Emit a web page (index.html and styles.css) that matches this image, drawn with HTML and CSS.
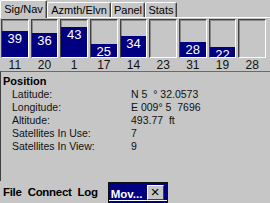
FILE: index.html
```html
<!DOCTYPE html>
<html>
<head>
<meta charset="utf-8">
<link rel="stylesheet" href="styles.css">
</head>
<body>
<div class="tabs">
  <div class="tab active w-sig">Sig/Nav</div>
  <div class="tab w-az">Azmth/Elvn</div>
  <div class="tab w-pan">Panel</div>
  <div class="tab w-st">Stats</div>
</div>
<div class="bars">
  <div class="bar"><div class="fill" style="height:26px">39</div></div>
  <div class="bar"><div class="fill" style="height:24px">36</div></div>
  <div class="bar"><div class="fill" style="height:30px">43</div></div>
  <div class="bar"><div class="fill" style="height:13px">25</div></div>
  <div class="bar"><div class="fill" style="height:21px">34</div></div>
  <div class="bar"></div>
  <div class="bar"><div class="fill" style="height:15px">28</div></div>
  <div class="bar"><div class="fill" style="height:10px">22</div></div>
  <div class="bar"></div>
</div>
<div class="labels">
  <span>11</span><span>20</span><span>1</span><span>17</span><span>14</span><span>23</span><span>31</span><span>19</span><span>28</span>
</div>
<div class="panel">
  <div class="heading">Position</div>
  <div class="row"><span class="key">Latitude:</span><span class="val">N 5 &nbsp;° 32.0573</span></div>
  <div class="row"><span class="key">Longitude:</span><span class="val">E 009° 5 &nbsp;7696</span></div>
  <div class="row"><span class="key">Altitude:</span><span class="val">493.77 &nbsp;ft</span></div>
  <div class="row"><span class="key">Satellites In Use:</span><span class="val">7</span></div>
  <div class="row"><span class="key">Satellites In View:</span><span class="val">9</span></div>
</div>
<div class="menubar">
  <span class="menu">File</span>
  <span class="menu">Connect</span>
  <span class="menu">Log</span>
  <div class="task">
    <span class="task-title">Mov...</span>
    <span class="close">×</span>
    <div class="task-grid"><i></i><i></i><i></i></div>
  </div>
</div>
</body>
</html>
```
FILE: styles.css
```css
html, body {
  margin: 0;
  padding: 0;
}
body {
  width: 270px;
  height: 203px;
  overflow: hidden;
  background: #c6c6c6;
  font-family: "Liberation Sans", Arial, sans-serif;
  color: #000;
}
.tabs {
  display: flex;
  align-items: flex-end;
  height: 17px;
  border-bottom: 1px solid #fff;
}
.tab {
  box-sizing: border-box;
  height: 15px;
  padding-top: 1px;
  font-size: 11px;
  line-height: 13px;
  text-align: center;
  border-left: 1px solid #fff;
  border-top: 1px solid #fff;
  border-right: 1px solid #404040;
  box-shadow: inset -1px 0 0 #8a8a8a;
  border-radius: 2px 2px 0 0;
  background: #c6c6c6;
}
.tab.active {
  height: 18px;
  margin-bottom: -1px;
  padding-top: 2px;
  position: relative;
}
.w-sig { width: 47px; }
.w-az { width: 64px; }
.w-pan { width: 34px; }
.w-st { width: 32px; }

.bars {
  display: grid;
  grid-template-columns: repeat(9, 1fr);
  column-gap: 2px;
  width: 265px;
  margin: 1px 0 0 1px;
  height: 39px;
}
.bar {
  box-sizing: border-box;
  height: 39px;
  border-top: 1px solid #404040;
  border-left: 1px solid #404040;
  border-right: 1px solid #fff;
  border-bottom: 1px solid #fff;
  box-shadow: inset 1px 1px 0 #8a8a8a;
  display: flex;
  flex-direction: column;
  justify-content: flex-end;
  overflow: hidden;
}
.fill {
  background: #000080;
  color: #fff;
  font-size: 13px;
  line-height: 15px;
  text-align: center;
  overflow: hidden;
}
.labels {
  display: grid;
  grid-template-columns: repeat(9, 1fr);
  column-gap: 2px;
  width: 265px;
  margin-left: 1px;
  height: 12px;
  padding-top: 1px;
  font-size: 12px;
  line-height: 12px;
  text-align: center;
  color: #111;
}
.panel {
  box-sizing: border-box;
  height: 110px;
  border-top: 1px solid #6a6a6a;
  border-left: 1px solid #404040;
  padding: 3px 0 0 2px;
  font-size: 10.5px;
  line-height: 13px;
}
.heading {
  font-weight: bold;
  font-size: 11px;
}
.row {
  display: flex;
  padding-left: 9px;
  color: #111;
}
.key {
  width: 119px;
}
.menubar {
  display: flex;
  align-items: flex-start;
  height: 22px;
  padding-left: 3px;
  column-gap: 6px;
}
.menu {
  font-weight: bold;
  font-size: 11.5px;
  line-height: 13px;
  margin-top: 5px;
  letter-spacing: -0.3px;
}
.task {
  box-sizing: border-box;
  margin-left: 4px;
  margin-top: 1px;
  width: 60px;
  height: 22px;
  background: #000080;
  border: 1px solid #101010;
  display: flex;
  align-items: flex-start;
  position: relative;
}
.task-title {
  color: #fff;
  font-weight: bold;
  font-size: 11.5px;
  line-height: 13px;
  margin: 5px 0 0 2px;
  width: 36px;
}
.close {
  box-sizing: border-box;
  width: 17px;
  height: 15px;
  margin-top: 2px;
  background: #c6c6c6;
  border-top: 1px solid #fff;
  border-left: 1px solid #fff;
  border-right: 1px solid #404040;
  border-bottom: 1px solid #404040;
  font-size: 15px;
  line-height: 12px;
  text-align: center;
  color: #000;
}
.task-grid {
  position: absolute;
  left: 0;
  right: 0;
  bottom: 0;
  height: 2px;
  border-top: 1px solid #fff;
  display: flex;
}
.task-grid i {
  width: 19px;
  border-right: 1px solid #000;
}
```
